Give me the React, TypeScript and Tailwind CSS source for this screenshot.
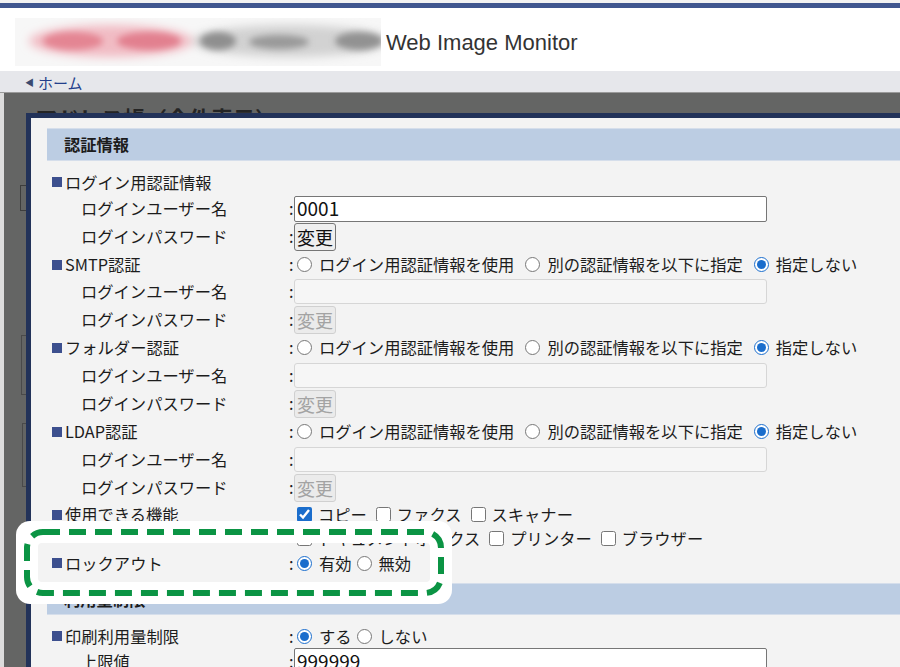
import React from 'react';

const Sq = () => <span className="inline-block w-[10px] h-[10px] bg-[#3c4f8e] mr-[3px] shrink-0" />;

function Row({ h, head, label, children }: { h: string; head?: boolean; label: React.ReactNode; children?: React.ReactNode }) {
  return (
    <div className={`flex items-center ${h}`}>
      {head ? (
        <div className="w-[242px] shrink-0 pl-[5px] flex items-center">
          <Sq />
          {label}
        </div>
      ) : (
        <div className="w-[242px] shrink-0 pl-[34px]">{label}</div>
      )}
      {children !== undefined && (
        <div className="flex items-center">
          <span className="w-[5px]">:</span>
          {children}
        </div>
      )}
    </div>
  );
}

function Radio({ name, label, checked }: { name: string; label: string; checked?: boolean }) {
  return (
    <label className="flex items-center">
      <input type="radio" name={name} defaultChecked={checked} className="w-[15px] h-[15px] ml-[3px] mr-[7px] accent-[#1a6dcc]" />
      {label}
    </label>
  );
}

function Check({ label, checked }: { label: string; checked?: boolean }) {
  return (
    <label className="flex items-center">
      <input type="checkbox" defaultChecked={checked} className="w-[15px] h-[15px] ml-[3px] mr-[6px] accent-[#1a6dcc]" />
      {label}
    </label>
  );
}

const AuthRadios = ({ name }: { name: string }) => (
  <div className="flex items-center gap-[8px]">
    <Radio name={name} label="ログイン用認証情報を使用" />
    <Radio name={name} label="別の認証情報を以下に指定" />
    <Radio name={name} label="指定しない" checked />
  </div>
);

const TextBox = ({ value }: { value: string }) => (
  <input
    readOnly
    defaultValue={value}
    className="w-[473px] h-[26px] border border-[#767676] rounded-[2px] bg-white px-[2px] text-[19px] text-[#111] outline-none"
  />
);

const DisabledBox = () => (
  <div className="w-[473px] h-[25px] border border-[#d6d6d6] rounded-[3px] bg-[#f6f6f6]" />
);

const ChangeBtn = ({ disabled }: { disabled?: boolean }) =>
  disabled ? (
    <button className="h-[28px] w-[42px] border border-[#d0d0d0] rounded-[3px] bg-[#ebebeb] text-[18px] leading-none text-[#a3a3a3]">変更</button>
  ) : (
    <button className="h-[28px] w-[42px] border border-[#767676] rounded-[3px] bg-[#efefef] text-[18px] leading-none text-[#111]">変更</button>
  );

export default function App() {
  return (
    <div className="w-[900px] h-[667px] overflow-hidden bg-white font-['Noto_Sans_CJK_JP','Noto_Sans',sans-serif] text-[16.3px] text-[#1c1c1c]">
      {/* top stripe */}
      <div className="h-[3px] bg-[#f2f2f2]" />
      <div className="h-[5px] bg-[#40568f]" />

      {/* header */}
      <div className="h-[63px] flex items-center">
        <div className="ml-[15px] mt-[4px] w-[366px] h-[48px] bg-[#f7f7f7]">
          <svg width="366" height="48" viewBox="0 0 366 48">
            <defs>
              <filter id="bl" x="-20%" y="-60%" width="140%" height="220%">
                <feGaussianBlur stdDeviation="5" />
              </filter>
              <filter id="bl2" x="-20%" y="-60%" width="140%" height="220%">
                <feGaussianBlur stdDeviation="3" />
              </filter>
            </defs>
            <g filter="url(#bl)">
              <ellipse cx="96" cy="23" rx="82" ry="16" fill="#f1bcc4" />
              <ellipse cx="275" cy="23" rx="98" ry="16" fill="#d2d2d2" />
            </g>
            <g filter="url(#bl2)">
              <ellipse cx="58" cy="23" rx="30" ry="9" fill="#e48593" />
              <ellipse cx="134" cy="23" rx="32" ry="9" fill="#e2808f" />
              <ellipse cx="203" cy="23" rx="18" ry="9" fill="#8f8f8f" />
              <ellipse cx="264" cy="24" rx="30" ry="7" fill="#9a9a9a" />
              <ellipse cx="344" cy="23" rx="24" ry="9" fill="#929292" />
            </g>
          </svg>
        </div>
        <div className="ml-[5px] mt-[6px] font-['Liberation_Sans',Arial,sans-serif] text-[22px] text-[#333]">Web Image Monitor</div>
      </div>

      {/* nav */}
      <div className="h-[21px] bg-[#e6e7eb] flex items-center pl-[25px] pt-[3px] text-[15px] text-[#233f8c]">
        <span className="text-[9px] mr-[4px] text-[#3a4a70]">◀</span>
        ホーム
      </div>
      <div className="h-[1px] bg-[#9a9a9a]" />

      {/* dimmed page */}
      <div className="relative h-[576px] bg-[#646564]">
        <div className="absolute left-0 top-0 bottom-0 w-[4px] bg-[#dcdcdc]" />
        <div className="pl-[35px] pt-[8px] font-bold text-[22px] text-[#242424]">アドレス帳（全件表示）</div>
        <div className="absolute left-[20px] top-[92px] w-[20px] h-[26px] border border-[#3d3d3d]" />
        <div className="absolute left-[21px] top-[242px] w-[20px] h-[60px] border border-[#4a4a4a]" />
        <div className="absolute left-[22px] top-[330px] w-[20px] h-[64px] border border-[#4a4a4a]" />

        {/* dialog */}
        <div className="absolute left-[26px] top-[20px] w-[900px] h-[600px] border-[5px] border-[#223259] bg-[#f3f3f3] pt-[10px] pl-[16px]">
          <div className="h-[33px] bg-[#bccde3] border-y border-[#d5deeb] flex items-center pl-[17px] font-bold">認証情報</div>

          <div className="mt-[8px]">
            <Row h="h-[26px]" head label="ログイン用認証情報" />
            <Row h="h-[27px]" label="ログインユーザー名">
              <TextBox value="0001" />
            </Row>
            <Row h="h-[29px]" label="ログインパスワード">
              <ChangeBtn />
            </Row>

            <Row h="h-[27px]" head label="SMTP認証">
              <AuthRadios name="smtp" />
            </Row>
            <Row h="h-[27px]" label="ログインユーザー名">
              <DisabledBox />
            </Row>
            <Row h="h-[29px]" label="ログインパスワード">
              <ChangeBtn disabled />
            </Row>

            <Row h="h-[27px]" head label="フォルダー認証">
              <AuthRadios name="folder" />
            </Row>
            <Row h="h-[28px]" label="ログインユーザー名">
              <DisabledBox />
            </Row>
            <Row h="h-[29px]" label="ログインパスワード">
              <ChangeBtn disabled />
            </Row>

            <Row h="h-[27px]" head label="LDAP認証">
              <AuthRadios name="ldap" />
            </Row>
            <Row h="h-[28px]" label="ログインユーザー名">
              <DisabledBox />
            </Row>
            <Row h="h-[29px]" label="ログインパスワード">
              <ChangeBtn disabled />
            </Row>

            {/* functions */}
            <div className="flex items-start">
              <div className="w-[242px] shrink-0 pl-[5px] h-[25px] flex items-center">
                <Sq />
                使用できる機能
              </div>
              <div className="flex flex-col pl-[5px]">
                <div className="h-[25px] flex items-center gap-[6px]">
                  <Check label="コピー" checked />
                  <Check label="ファクス" />
                  <Check label="スキャナー" />
                </div>
                <div className="h-[23px] flex items-center gap-[6px]">
                  <Check label="ドキュメントボックス" />
                  <Check label="プリンター" />
                  <Check label="ブラウザー" />
                </div>
              </div>
            </div>

            {/* lockout with highlight */}
            <div className="relative">
              <Row h="h-[26px]" head label="ロックアウト">
                <div className="flex items-center gap-[2px]">
                  <Radio name="lock" label="有効" checked />
                  <Radio name="lock" label="無効" />
                </div>
              </Row>
              <div className="absolute z-10 left-[-9px] top-[-7px] w-[392px] h-[39px] rounded-[4px] shadow-[0_0_0_22px_#ffffff] pointer-events-none" />
              <svg className="absolute z-10 left-[-23px] top-[-21px] pointer-events-none" width="420" height="67" viewBox="0 0 420 67">
                <rect x="3" y="3" width="414" height="61" rx="16" fill="none" stroke="#0b9444" strokeWidth="6" strokeDasharray="17 9" />
              </svg>
            </div>

            <div className="mt-[7px] h-[32px] bg-[#bccde3] border-y border-[#d5deeb] flex items-center pl-[17px] font-bold">利用量制限</div>

            <div className="mt-[9px]">
              <Row h="h-[24px]" head label="印刷利用量制限">
                <div className="flex items-center gap-[2px]">
                  <Radio name="limit" label="する" checked />
                  <Radio name="limit" label="しない" />
                </div>
              </Row>
              <Row h="h-[26px]" label="上限値">
                <TextBox value="999999" />
              </Row>
            </div>
          </div>
        </div>
      </div>
    </div>
  );
}
